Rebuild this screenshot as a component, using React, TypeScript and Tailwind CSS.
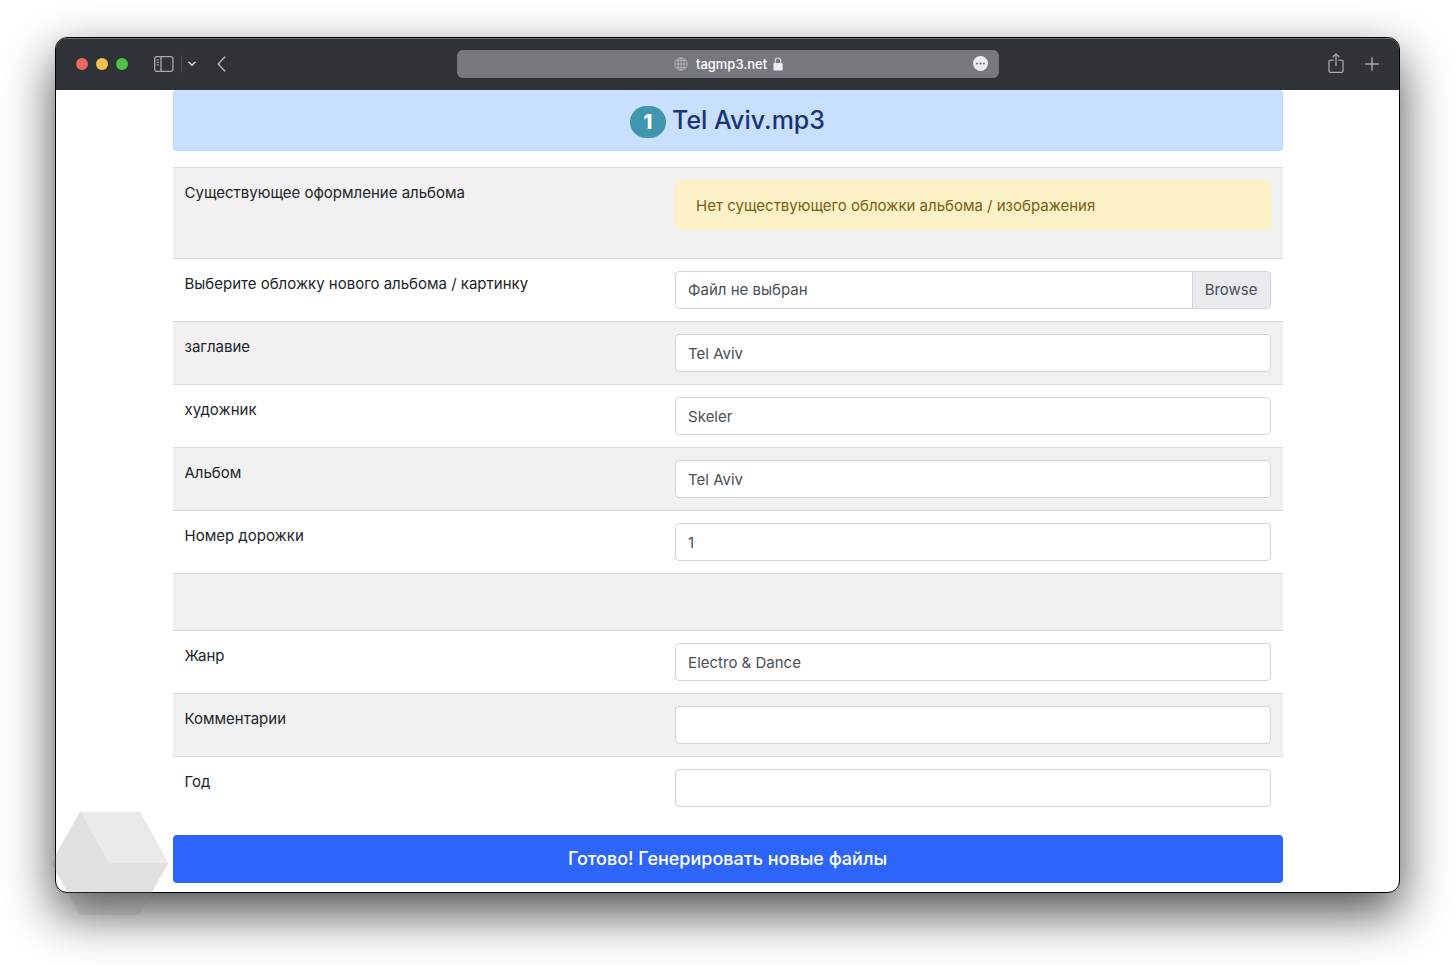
import type { ReactNode } from "react";

const fields = [
  { id: "title", label: "заглавие", value: "Tel Aviv" },
  { id: "artist", label: "художник", value: "Skeler" },
  { id: "album", label: "Альбом", value: "Tel Aviv" },
  { id: "track", label: "Номер дорожки", value: "1" },
];

const extraFields = [
  { id: "genre", label: "Жанр", value: "Electro & Dance" },
  { id: "comments", label: "Комментарии", value: "" },
  { id: "year", label: "Год", value: "" },
];

const Row = ({ id, label, children }: { id?: string; label: string; children: ReactNode }) => (
  <tr className="border-t border-[#d8dadd] odd:bg-[#f1f1f1]">
    <td className="w-[44.2%] p-3 align-top">
      {id ? <label htmlFor={id}>{label}</label> : label}
    </td>
    <td className="p-3">{children}</td>
  </tr>
);

const TextRow = ({ id, label, value }: { id: string; label: string; value: string }) => (
  <Row id={id} label={label}>
    <input
      id={id}
      type="text"
      defaultValue={value}
      className="block h-[38px] w-full rounded border border-[#ced4da] bg-white px-3 text-[#495057]"
    />
  </Row>
);

const TitleBar = () => (
  <header className="flex h-[52px] items-center justify-between border-t border-[#6b6e71] bg-[#2f3237] px-5 pb-0.5 text-[#a9abae]">
    <div className="flex w-72 items-center">
      <div className="flex gap-2">
        <span className="size-3 rounded-full bg-[#ed6a5e]" />
        <span className="size-3 rounded-full bg-[#f4bf4f]" />
        <span className="size-3 rounded-full bg-[#4fc245]" />
      </div>
      <button type="button" aria-label="Sidebar" className="ml-[26px]">
        <svg width="20" height="16" viewBox="0 0 20 16" fill="none" stroke="currentColor" strokeWidth="1.3">
          <rect x="0.7" y="0.7" width="18.2" height="14.6" rx="2" />
          <path d="M7 0.7v14.6" />
          <path d="M2.6 4h2.4M2.6 6.4h2.4M2.6 8.8h2.4" strokeWidth="1" />
        </svg>
      </button>
      <span className="ml-[7px] h-[18px] w-px bg-[#484b50]" />
      <button type="button" aria-label="Tab groups" className="ml-1.5">
        <svg width="8" height="6" viewBox="0 0 8 6" fill="none" stroke="#d4d5d6" strokeWidth="1.5" strokeLinecap="round" strokeLinejoin="round">
          <path d="M1 1.2l3 3 3-3" />
        </svg>
      </button>
      <button type="button" aria-label="Back" className="ml-[21px]">
        <svg width="9" height="16" viewBox="0 0 9 16" fill="none" stroke="#b4b6b8" strokeWidth="1.4" strokeLinecap="round" strokeLinejoin="round">
          <path d="M7.8 1L1.2 8l6.6 7" />
        </svg>
      </button>
    </div>
    <div className="flex h-7 w-[542px] items-center rounded-md bg-[#75787d] pr-[11px]">
      <div className="flex grow items-center justify-center pl-7 text-[13px] leading-5 font-medium text-white">
        <svg width="14" height="14" viewBox="0 0 14 14" fill="none" stroke="#b6b8ba" strokeWidth="0.9" className="mr-2">
          <circle cx="7" cy="7" r="6.2" />
          <ellipse cx="7" cy="7" rx="3" ry="6.2" />
          <path d="M7 0.8v12.4M0.8 7h12.4M1.8 3.7h10.4M1.8 10.3h10.4" />
        </svg>
        tagmp3.net
        <svg width="10" height="14" viewBox="0 0 10 14" className="ml-1.5">
          <path d="M2.3 7V3.7a2.7 2.7 0 0 1 5.4 0V7" fill="none" stroke="#d6d7d8" strokeWidth="1.2" />
          <rect x="0.4" y="6" width="9.2" height="7.6" rx="1.2" fill="#ebecec" />
        </svg>
      </div>
      <button type="button" aria-label="Page menu">
        <svg width="15" height="15" viewBox="0 0 15 15">
          <circle cx="7.5" cy="7.5" r="7.5" fill="#ebecee" />
          <g fill="#75787d">
            <circle cx="4.1" cy="7.5" r="1.1" />
            <circle cx="7.5" cy="7.5" r="1.1" />
            <circle cx="10.9" cy="7.5" r="1.1" />
          </g>
        </svg>
      </button>
    </div>
    <div className="flex w-72 items-center justify-end gap-[21px]">
      <button type="button" aria-label="Share">
        <svg width="16" height="21" viewBox="0 0 16 21" fill="none" stroke="currentColor" strokeWidth="1.3" strokeLinecap="round" strokeLinejoin="round">
          <path d="M5 7.2H2.6A1.6 1.6 0 0 0 1 8.8v9A1.6 1.6 0 0 0 2.6 19.4h10.8a1.6 1.6 0 0 0 1.6-1.6v-9a1.6 1.6 0 0 0-1.6-1.6H11" />
          <path d="M8 12.5V1M5 3.8L8 0.9l3 2.9" />
        </svg>
      </button>
      <button type="button" aria-label="New tab">
        <svg width="14" height="14" viewBox="0 0 14 14" fill="none" stroke="currentColor" strokeWidth="1.4" strokeLinecap="round">
          <path d="M7 0.7v12.6M0.7 7h12.6" />
        </svg>
      </button>
    </div>
  </header>
);

const Cube = () => (
  <svg
    width="118"
    height="104"
    viewBox="0 0 118 104"
    fill="#808080"
    aria-hidden="true"
    className="pointer-events-none absolute -bottom-[22px] -left-1"
  >
    <path d="M29 0.5H89L117.5 52H58.5z" opacity="0.17" />
    <path d="M29 0.5L58.5 52H117.5L88 104H29L0 52z" opacity="0.24" />
  </svg>
);

const App = () => {
  return (
    <div className="min-h-screen bg-white px-[55px] pt-[37px] pb-[73px] font-['Inter',sans-serif] text-[15px] leading-[26px] text-[#212529]">
      <div className="relative">
        <div className="overflow-hidden rounded-xl border border-black bg-white shadow-[0_20px_50px_rgba(0,0,0,0.7)]">
          <TitleBar />
          <main className="mx-auto max-w-[1110px] pb-[9px]">
            <h1 className="mb-4 flex h-[61px] items-center justify-center gap-1.5 rounded border border-t-0 border-[#b8daff] bg-[#c9dfff] text-[25px] font-medium text-[#1a3478]">
              <span className="mt-1 flex h-8 w-9 items-center justify-center rounded-full bg-[#3e97ad] text-xl font-extrabold text-white">1</span>
              Tel Aviv.mp3
            </h1>
            <table className="mb-4 w-full border-collapse">
              <tbody>
                <Row label="Существующее оформление альбома">
                  <div className="mb-4 rounded border border-[#ffeeba] bg-[#fdf1c8] px-5 pt-3 pb-2.5 text-[#7a6011]">
                    Нет существующего обложки альбома / изображения
                  </div>
                </Row>
                <Row id="cover" label="Выберите обложку нового альбома / картинку">
                  <input id="cover" type="file" className="peer sr-only" />
                  <label htmlFor="cover" className="flex h-[38px] items-center overflow-hidden rounded border border-[#ced4da] bg-white pl-3 text-[#495057]">
                    <span className="grow">Файл не выбран</span>
                    <span className="flex h-full items-center border-l border-[#ced4da] bg-[#e9eaed] px-3">Browse</span>
                  </label>
                </Row>
                {fields.map((field) => (
                  <TextRow key={field.id} {...field} />
                ))}
                <tr className="h-[57px] border-t border-[#d8dadd] bg-[#f1f1f1]">
                  <td colSpan={2} />
                </tr>
                {extraFields.map((field) => (
                  <TextRow key={field.id} {...field} />
                ))}
              </tbody>
            </table>
            <button type="submit" className="block h-12 w-full rounded bg-[#2d65fa] text-lg font-medium text-white">
              Готово! Генерировать новые файлы
            </button>
          </main>
        </div>
        <Cube />
      </div>
    </div>
  );
};

export default App;
